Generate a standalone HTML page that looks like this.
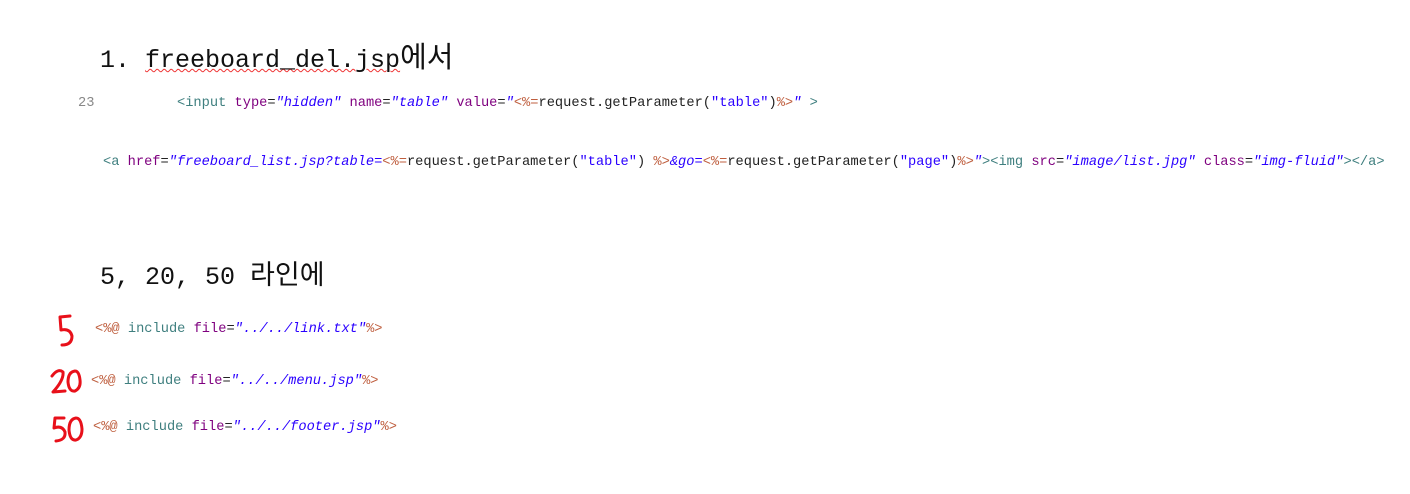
<html><head><style>
body{margin:0;width:1410px;height:494px;background:#fff;position:relative;overflow:hidden;font-family:"Liberation Mono","Noto Sans CJK KR",monospace}
.a{position:absolute;white-space:pre;line-height:1.2}
.h{font-size:25px;color:#111}
.k{font-family:'Noto Sans CJK KR',sans-serif;font-size:29px}
.c{font-size:13.7px;color:#222}
.t{color:#3f7f7f}.n{color:#7f007f}.v{color:#2a00ff;font-style:italic}.j{color:#bf5f3f}
</style></head><body>
<div class="a h" style="left:100px;top:38px">1. <span style="text-decoration:underline wavy #e33;text-decoration-thickness:1px">freeboard_del.jsp</span><span class="k">에서</span></div>
<div class="a c" style="left:78px;top:96px;color:#888">23</div>
<div class="a c" style="left:177px;top:96px"><span class="t">&lt;input</span> <span class="n">type</span>=<span class="v">"hidden"</span> <span class="n">name</span>=<span class="v">"table"</span> <span class="n">value</span>=<span class="v">"</span><span class="j">&lt;%=</span>request.getParameter(<span class="v" style="font-style:normal">"table"</span>)<span class="j">%&gt;</span><span class="v">"</span> <span class="t">&gt;</span></div>
<div class="a c" style="left:103px;top:155px"><span class="t">&lt;a</span> <span class="n">href</span>=<span class="v">"freeboard_list.jsp?table=</span><span class="j">&lt;%=</span>request.getParameter(<span class="v" style="font-style:normal">"table"</span>) <span class="j">%&gt;</span><span class="v">&amp;go=</span><span class="j">&lt;%=</span>request.getParameter(<span class="v" style="font-style:normal">"page"</span>)<span class="j">%&gt;</span><span class="v">"</span><span class="t">&gt;&lt;img</span> <span class="n">src</span>=<span class="v">"image/list.jpg"</span> <span class="n">class</span>=<span class="v">"img-fluid"</span><span class="t">&gt;&lt;/a&gt;</span></div>
<div class="a h" style="left:100px;top:257px">5, 20, 50 <span class="k" style="font-size:27px">라인에</span></div>
<div class="a c" style="left:95px;top:322px"><span class="j">&lt;%@</span> <span class="t">include</span> <span class="n">file</span>=<span class="v">"../../link.txt"</span><span class="j">%&gt;</span></div>
<div class="a c" style="left:91px;top:374px"><span class="j">&lt;%@</span> <span class="t">include</span> <span class="n">file</span>=<span class="v">"../../menu.jsp"</span><span class="j">%&gt;</span></div>
<div class="a c" style="left:93px;top:420px"><span class="j">&lt;%@</span> <span class="t">include</span> <span class="n">file</span>=<span class="v">"../../footer.jsp"</span><span class="j">%&gt;</span></div>
<svg class="a" style="left:0;top:0" width="1410" height="494" fill="none" stroke="#e8101a" stroke-width="3" stroke-linecap="round" stroke-linejoin="round">
<path d="M70 316 L60 317 L61 330 Q70 328 72 336 Q72 345 62 345"/>
<path d="M52 376 Q58 368 63 372 Q64 380 53 392 L65 391"/>
<path d="M75 371 Q68 372 68 382 Q69 392 75 391 Q81 388 80 380 Q79 371 75 371"/>
<path d="M64 418 L55 418 L54 428 Q62 425 65 432 Q66 440 56 441"/>
<path d="M76 418 Q69 419 69 430 Q70 441 76 440 Q82 438 82 429 Q81 418 76 418"/>
</svg>
</body></html>
